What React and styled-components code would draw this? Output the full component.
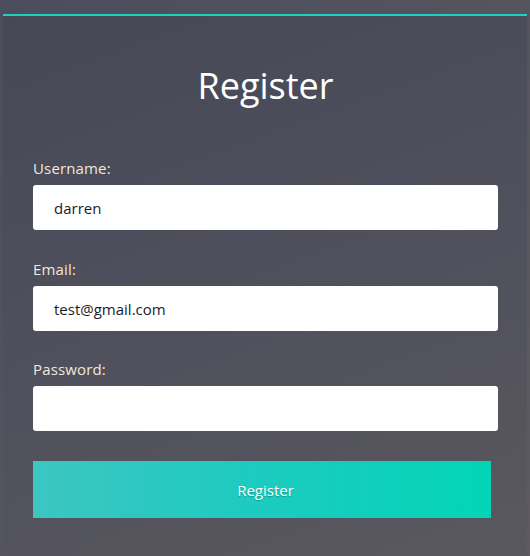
import React from "react";
import styled, { createGlobalStyle } from "styled-components";

const Global = createGlobalStyle`
  html, body { margin: 0; padding: 0; }
  body {
    min-height: 556px;
    background: linear-gradient(135deg, #4b4d5d 0%, #55555f 50%, #5d5b61 100%);
    font-family: "Open Sans", "Noto Sans", sans-serif;
  }
`;

const Card = styled.div`
  margin: 14px 3px 0;
  min-height: 542px;
  box-sizing: border-box;
  border-top: 2px solid #1dd0c0;
  background: linear-gradient(160deg, #464856 0%, #4f505c 50%, #5a585f 100%);
  padding: 46px 29px 0 30px;
`;

const Title = styled.h1`
  margin: 0 0 48px;
  text-align: center;
  color: #ffffff;
  font-weight: 400;
  font-size: 36px;
  line-height: 48px;
`;

const Field = styled.div`
  display: flex;
  flex-direction: column;
  gap: 6px;
  margin-bottom: ${(p) => p.$mb ?? 29}px;
`;

const Label = styled.label`
  color: #f0e7de;
  font-size: 15px;
  line-height: 21px;
  letter-spacing: 0.15px;
`;

const Input = styled.input`
  box-sizing: border-box;
  width: 100%;
  height: 45px;
  border: none;
  border-radius: 3px;
  background: #fff;
  padding: 0 21px;
  font-family: "Open Sans", "Noto Sans", sans-serif;
  font-size: 15px;
  color: #1b1b28;
  outline: none;
`;

const Button = styled.button`
  display: block;
  width: 458px;
  height: 57px;
  border: none;
  padding: 0 0 0 7px;
  background: linear-gradient(to right, #3cc6c1 0%, #1ccbbf 50%, #02d5b7 100%);
  color: #fff;
  font-family: "Open Sans", "Noto Sans", sans-serif;
  font-size: 15px;
  text-shadow: 0 1px 1px rgba(0, 0, 0, 0.25);
  cursor: pointer;
`;

export default function App() {
  return (
    <>
      <Global />
      <Card>
        <Title>Register</Title>
        <Field>
          <Label>Username:</Label>
          <Input defaultValue="darren" />
        </Field>
        <Field $mb={28}>
          <Label>Email:</Label>
          <Input defaultValue="test@gmail.com" />
        </Field>
        <Field $mb={30}>
          <Label>Password:</Label>
          <Input type="password" />
        </Field>
        <Button>Register</Button>
      </Card>
    </>
  );
}
